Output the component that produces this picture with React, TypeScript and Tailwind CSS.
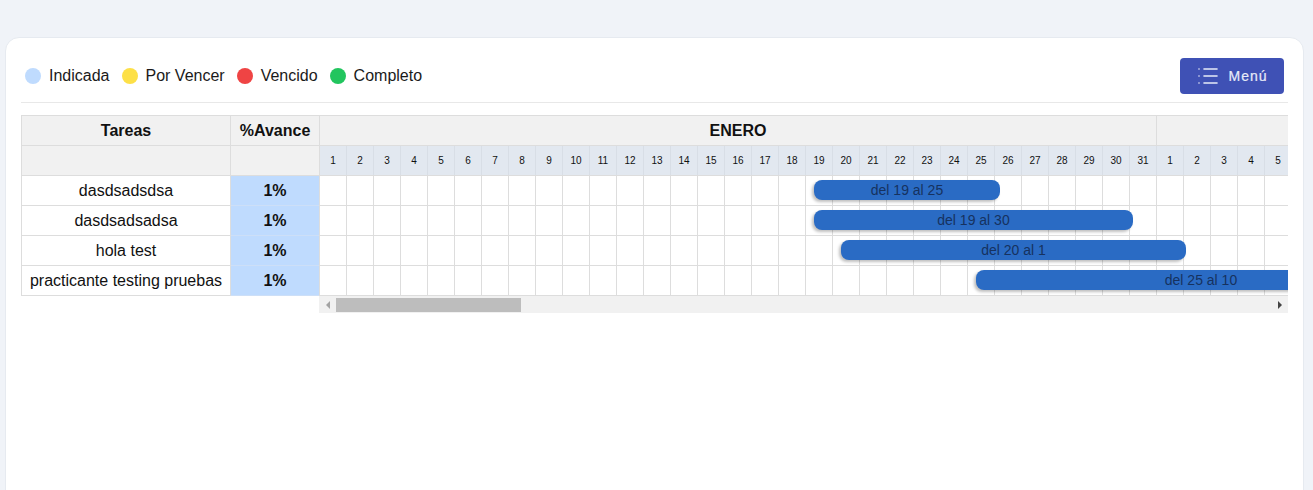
import { List } from "lucide-react";

const legend = [
  { label: "Indicada", color: "bg-[#bfdbfe]" },
  { label: "Por Vencer", color: "bg-[#fde047]" },
  { label: "Vencido", color: "bg-[#ef4444]" },
  { label: "Completo", color: "bg-[#22c55e]" },
];

// left and width are in px from the start of the timeline
const tasks = [
  { name: "dasdsadsdsa", label: "del 19 al 25", left: 495, width: 186 },
  { name: "dasdsadsadsa", label: "del 19 al 30", left: 495, width: 319 },
  { name: "hola test", label: "del 20 al 1", left: 522, width: 345 },
  { name: "practicante testing pruebas", label: "del 25 al 10", left: 657, width: 450 },
];

const enero = Array.from({ length: 31 }, (_, i) => i + 1);
const febrero = Array.from({ length: 5 }, (_, i) => i + 1);
const days = [...enero, ...febrero];

export default function App() {
  return (
    <div className="h-screen overflow-hidden bg-[#f0f3f8] pt-[37px] pl-[5px] pr-[9px] font-['Liberation_Sans',Arial,sans-serif] text-[#111]">
      <div className="h-[calc(100%+14px)] rounded-[14px] border border-[#e6eaf0] bg-white px-[15px]">
        <div className="flex h-[65px] items-center justify-between border-b border-[#e8e8e8] pt-3">
          <div className="flex items-center gap-3 pl-1">
            {legend.map((item) => (
              <div key={item.label} className="flex items-center gap-2">
                <span className={`h-4 w-4 rounded-full ${item.color}`} />
                <span className="text-base leading-5 text-[#1a1a1a]">{item.label}</span>
              </div>
            ))}
          </div>
          <button
            type="button"
            className="mr-1 flex h-9 w-[104px] items-center justify-center gap-2 rounded bg-[#3f51b5] text-sm tracking-[1px] text-[#e8ebf8]"
          >
            <List className="h-6 w-6" strokeWidth={1.6} />
            <span className="[-webkit-text-stroke:0.2px_#e8ebf8]">Menú</span>
          </button>
        </div>

        <div className="mt-3 flex">
          <div className="w-[298px] shrink-0">
            <div className="flex h-[31px] border-y border-l border-[#ddd] bg-[#f1f1f1] text-base font-bold">
              <div className="flex w-[209px] items-center justify-center border-r border-[#ddd]">Tareas</div>
              <div className="flex w-[88px] items-center justify-center">%Avance</div>
            </div>
            <div className="flex h-[30px] border-b border-l border-[#ddd] bg-[#f1f1f1]">
              <div className="w-[209px] border-r border-[#ddd]" />
              <div className="w-[88px]" />
            </div>
            {tasks.map((task) => (
              <div key={task.name} className="flex h-[30px] border-b border-l border-[#ddd] text-base">
                <div className="flex w-[209px] items-center justify-center whitespace-nowrap border-r border-[#ddd]">
                  {task.name}
                </div>
                <div className="-mb-px flex w-[88px] items-center justify-center border-b border-[#cddff7] bg-[#bfdbfe] font-bold">
                  1%
                </div>
              </div>
            ))}
          </div>

          <div className="min-w-0 flex-1 overflow-hidden">
            <div className="flex h-[31px] w-max border-y border-l border-[#ddd] bg-[#f1f1f1] text-base font-bold">
              <div className="flex w-[837px] items-center justify-center border-r border-[#ddd]">ENERO</div>
              <div className="w-[135px]" />
            </div>
            <div className="flex h-[30px] w-max border-b border-l border-[#ddd] bg-[#e2e8f0]">
              {days.map((day, i) => (
                <div
                  key={i}
                  className="flex w-[27px] items-center justify-center border-r border-[#d8dee6] text-[10px] text-[#111]"
                >
                  {day}
                </div>
              ))}
            </div>
            {tasks.map((task) => (
              <div key={task.name} className="relative flex h-[30px] w-max border-b border-l border-[#ddd]">
                {days.map((day, i) => (
                  <div key={i} className="w-[27px] border-r border-[#ddd]" />
                ))}
                <div
                  className="absolute top-[4px] flex h-5 items-center justify-center rounded-lg bg-[#2a6bc4] text-sm text-[#16325f] shadow-[-2px_2px_3px_rgba(0,0,0,0.25)]"
                  style={{ left: task.left - 1, width: task.width }}
                >
                  {task.label}
                </div>
              </div>
            ))}
            <div className="flex h-[17px] items-center bg-[#f1f1f1]">
              <div className="flex w-[17px] shrink-0 justify-center">
                <div className="h-0 w-0 border-y-4 border-r-4 border-y-transparent border-r-[#a3a3a3]" />
              </div>
              <div className="h-[14px] w-[185px] bg-[#bdbdbd]" />
              <div className="flex flex-1 justify-end pr-[6px]">
                <div className="h-0 w-0 border-y-4 border-l-4 border-y-transparent border-l-[#444]" />
              </div>
            </div>
          </div>
        </div>
      </div>
    </div>
  );
}
